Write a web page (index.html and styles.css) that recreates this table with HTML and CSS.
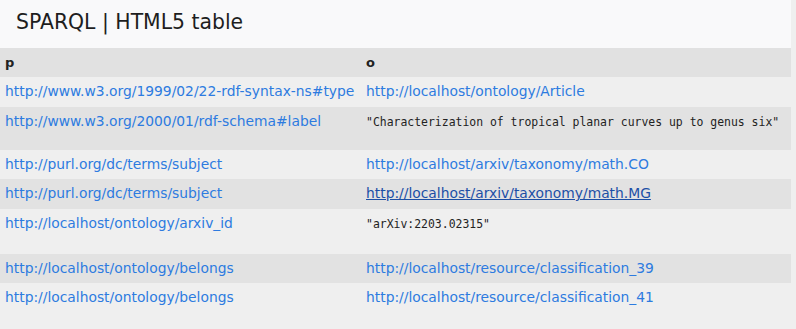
FILE: index.html
```html
<!DOCTYPE html>
<html>
<head>
<meta charset="utf-8">
<link rel="stylesheet" href="styles.css">
</head>
<body>
<div class="wrap">
  <h1 class="title">SPARQL | HTML5 table</h1>
  <table class="results">
    <thead>
      <tr><th>p</th><th>o</th></tr>
    </thead>
    <tbody>
      <tr><td><a href="#">http://www.w3.org/1999/02/22-rdf-syntax-ns#type</a></td><td><a href="#">http://localhost/ontology/Article</a></td></tr>
      <tr class="tall-a"><td><a href="#">http://www.w3.org/2000/01/rdf-schema#label</a></td><td><span class="lit">"Characterization of tropical planar curves up to genus six"</span></td></tr>
      <tr><td><a href="#">http://purl.org/dc/terms/subject</a></td><td><a href="#">http://localhost/arxiv/taxonomy/math.CO</a></td></tr>
      <tr><td><a href="#">http://purl.org/dc/terms/subject</a></td><td><a href="#" class="hover">http://localhost/arxiv/taxonomy/math.MG</a></td></tr>
      <tr class="tall-b"><td><a href="#">http://localhost/ontology/arxiv_id</a></td><td><span class="lit">"arXiv:2203.02315"</span></td></tr>
      <tr><td><a href="#">http://localhost/ontology/belongs</a></td><td><a href="#">http://localhost/resource/classification_39</a></td></tr>
      <tr><td><a href="#">http://localhost/ontology/belongs</a></td><td><a href="#">http://localhost/resource/classification_41</a></td></tr>
    </tbody>
  </table>
</div>
</body>
</html>
```
FILE: styles.css
```css
html, body {
  margin: 0;
  padding: 0;
  background: #efefef;
}
body {
  font-family: "DejaVu Sans", Verdana, sans-serif;
  color: #222;
}
.wrap {
  width: 791px;
}
.title {
  margin: 0;
  height: 48px;
  box-sizing: border-box;
  padding: 9px 16px 0;
  background: #f9f9fa;
  font-size: 20.4px;
  font-weight: normal;
  line-height: 26px;
  color: #1e1e1e;
}
.results {
  width: 100%;
  table-layout: fixed;
  border-collapse: collapse;
  font-size: 13.85px;
  line-height: 17px;
}
.results th {
  background: #e1e1e1;
  text-align: left;
  font-weight: bold;
  font-size: 13px;
  padding: 6px 5px;
  vertical-align: middle;
}
.results td {
  padding: 6px 5px 6.5px;
  vertical-align: top;
  white-space: nowrap;
}
.results th:first-child, .results td:first-child {
  width: 351px;
}
.results tbody tr:nth-child(even) {
  background: #e2e2e2;
}
.results a {
  color: #2d7be0;
  text-decoration: none;
}
.results a.hover {
  color: #1c4fa6;
  text-decoration: underline;
}
.results tr.tall-a td {
  padding-bottom: 19px;
}
.results tr.tall-b td {
  padding-bottom: 21px;
}
.lit {
  font-family: "DejaVu Sans Mono", Menlo, monospace;
  font-size: 11.45px;
  color: #222;
}
```
